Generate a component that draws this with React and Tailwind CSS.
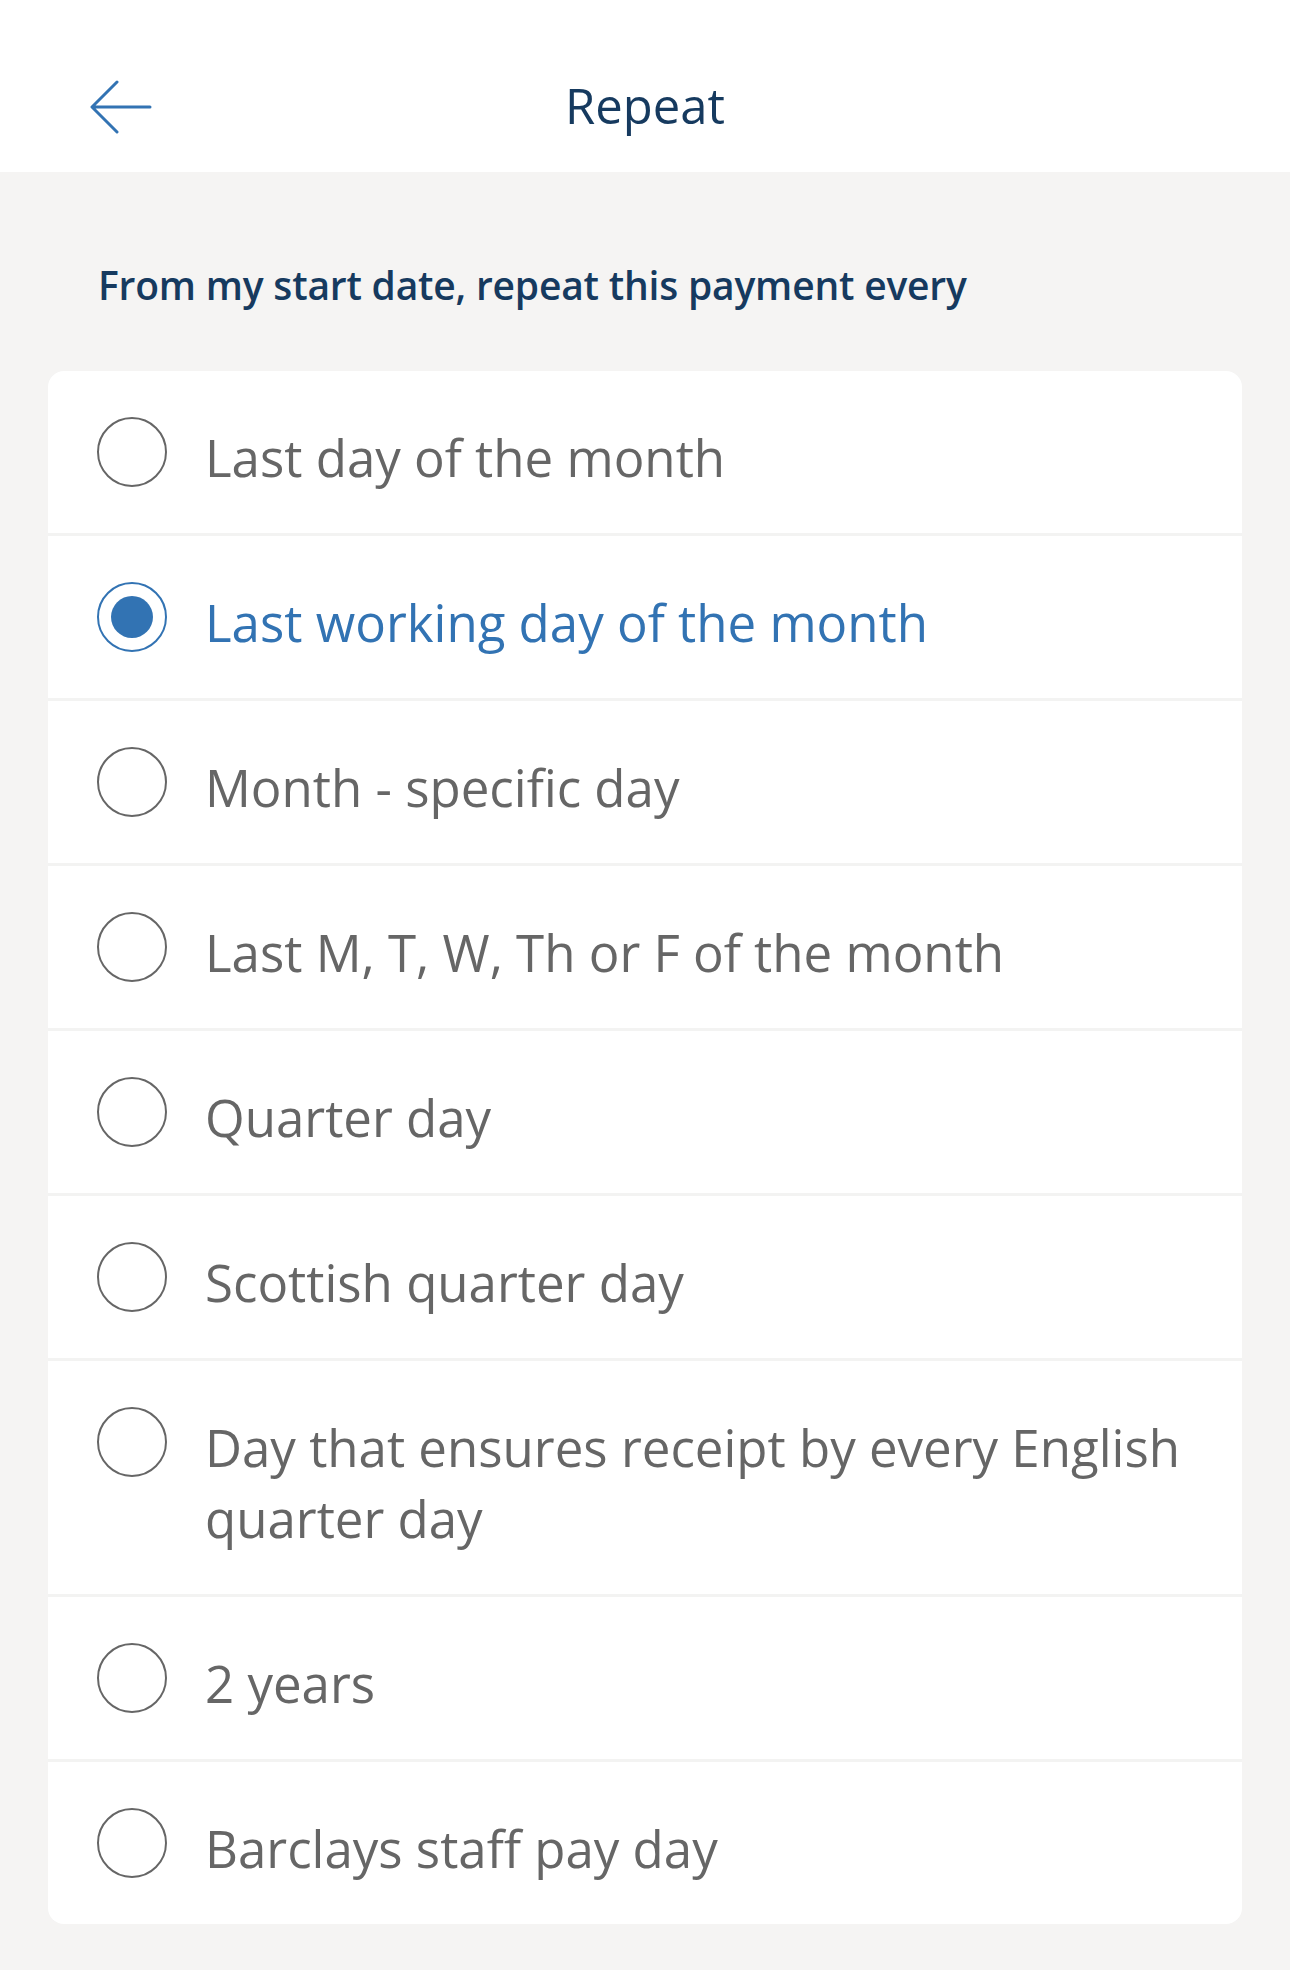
import { useState } from 'react';

const options = [
  'Last day of the month',
  'Last working day of the month',
  'Month - specific day',
  'Last M, T, W, Th or F of the month',
  'Quarter day',
  'Scottish quarter day',
  'Day that ensures receipt by every English quarter day',
  '2 years',
  'Barclays staff pay day',
];

function Radio({ checked }) {
  return (
    <span
      className={
        'flex h-[70px] w-[70px] shrink-0 items-center justify-center rounded-full border-[2.5px] ' +
        (checked ? 'border-[#3273b3]' : 'border-[#666666]')
      }
    >
      {checked && <span className="h-[42px] w-[42px] rounded-full bg-[#3273b3]" />}
    </span>
  );
}

export default function App() {
  const [selected, setSelected] = useState(1);

  return (
    <div className="min-h-[1970px] bg-[#f5f4f3] font-['Open_Sans',sans-serif]">
      {/* header */}
      <div className="relative flex h-[172px] items-center justify-center bg-white">
        <button className="absolute left-[90px] top-[80px]" aria-label="Back">
          <svg width="62" height="54" viewBox="0 0 62 54" fill="none">
            <path d="M60 27H3M27 2L2 27l25 25" stroke="#3273b3" strokeWidth="3" strokeLinecap="round" strokeLinejoin="round" />
          </svg>
        </button>
        <h1 className="mt-[38px] text-[49px] leading-none text-[#163a5f]">Repeat</h1>
      </div>

      <div className="px-[48px] pb-[47px]">
        <p className="pl-[50px] pt-[90px] pb-[63px] text-[39px] font-semibold leading-[46px] tracking-[-0.2px] text-[#163a5f]">
          From my start date, repeat this payment every
        </p>

        <div className="flex flex-col gap-[3px] overflow-hidden rounded-[16px] bg-[#f3f3f2]">
          {options.map((label, i) => {
            const checked = i === selected;
            return (
              <button
                key={label}
                onClick={() => setSelected(i)}
                className="flex items-start gap-[38px] bg-white pt-[46px] pb-[40px] pl-[49px] pr-[40px] text-left"
              >
                <span className="flex h-[70px] items-center">
                  <Radio checked={checked} />
                </span>
                <span
                  className={
                    'pt-[5px] text-[51px] leading-[71px] ' +
                    (checked ? 'text-[#3273b3]' : 'text-[#666666]')
                  }
                >
                  {label}
                </span>
              </button>
            );
          })}
        </div>
      </div>
    </div>
  );
}
